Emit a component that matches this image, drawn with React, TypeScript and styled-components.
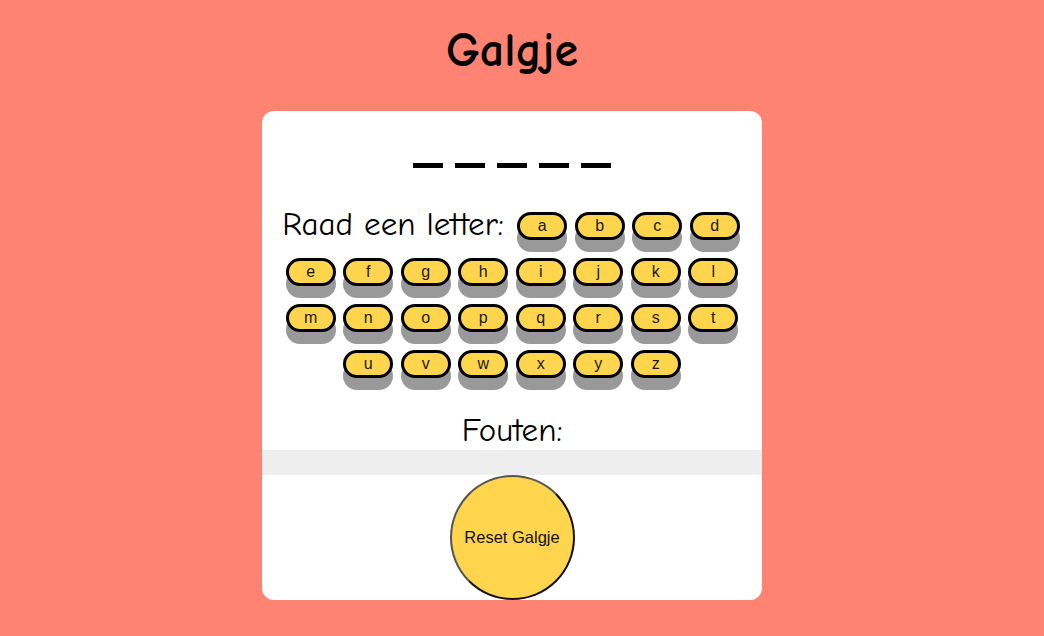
import React from "react"
import styled, { createGlobalStyle } from "styled-components"

const GlobalStyle = createGlobalStyle`
    body {
        margin: 0;
        background: #ff8373;
        font-family: "Comic Sans MS", "Comic Neue", "Open Sans", sans-serif;
    }
`

const Page = styled.div`
    display: flex;
    flex-direction: column;
    align-items: center;
    width: 1024px;
    min-height: 636px;
`

const Title = styled.h1`
    margin: 22px 0 32px;
    font-size: 48px;
    line-height: 57px;
    font-weight: 700;
    color: #000;
`

const Card = styled.main`
    display: flex;
    flex-direction: column;
    align-items: center;
    width: 500px;
    height: 489px;
    padding-top: 52px;
    box-sizing: border-box;
    background: #fff;
    border-radius: 12px;
    overflow: hidden;
`

const Word = styled.div`
    display: flex;
    gap: 12px;
`

const Blank = styled.span`
    width: 30px;
    height: 5px;
    background: #000;
`

const Letters = styled.div`
    display: flex;
    flex-direction: column;
    align-items: center;
    gap: 18px;
    margin-top: 44px;
`

const Row = styled.div`
    display: flex;
    align-items: center;
    gap: 7.5px;
    margin-right: ${({ $shift }: { $shift?: number }) => $shift ?? 0}px;
`

const Label = styled.span`
    font-size: 33px;
    line-height: 28px;
    margin: -4px 6px 0 0;
    color: #000;
`

const LetterButton = styled.button`
    width: 50px;
    height: 28px;
    padding: 0;
    border: 3px solid #000;
    border-radius: 14px;
    background: #ffd54d;
    box-shadow: 0 12px 0 #999;
    font-family: "Liberation Sans", Arial, sans-serif;
    font-size: 16px;
    line-height: 20px;
    color: #1a1a1a;
    cursor: pointer;
`

const Heading = styled.h2`
    margin: 33px 0 0;
    font-size: 33px;
    line-height: 39px;
    font-weight: 400;
    color: #000;
`

const Mistakes = styled.div`
    align-self: stretch;
    height: 25px;
    background: #eee;
`

const ResetButton = styled.button`
    width: 125px;
    height: 125px;
    padding: 0;
    border: 2px solid;
    border-color: #555 #111 #111 #555;
    border-radius: 50%;
    background: #ffd54d;
    font-family: "Liberation Sans", Arial, sans-serif;
    font-size: 16.5px;
    color: #111;
    cursor: pointer;
`

const alphabet = "abcdefghijklmnopqrstuvwxyz".split("")
const rows = [alphabet.slice(4, 12), alphabet.slice(12, 20), alphabet.slice(20)]

export default function App() {
    return (
        <Page>
            <GlobalStyle />
            <Title>Galgje</Title>
            <Card>
                <Word>
                    {[0, 1, 2, 3, 4].map(i => <Blank key={i} />)}
                </Word>
                <Letters>
                    <Row $shift={2}>
                        <Label>Raad een letter:</Label>
                        {alphabet.slice(0, 4).map(l => <LetterButton key={l}>{l}</LetterButton>)}
                    </Row>
                    {rows.map((row, i) => (
                        <Row key={i}>
                            {row.map(l => <LetterButton key={l}>{l}</LetterButton>)}
                        </Row>
                    ))}
                </Letters>
                <Heading>Fouten:</Heading>
                <Mistakes />
                <ResetButton>Reset Galgje</ResetButton>
            </Card>
        </Page>
    )
}
